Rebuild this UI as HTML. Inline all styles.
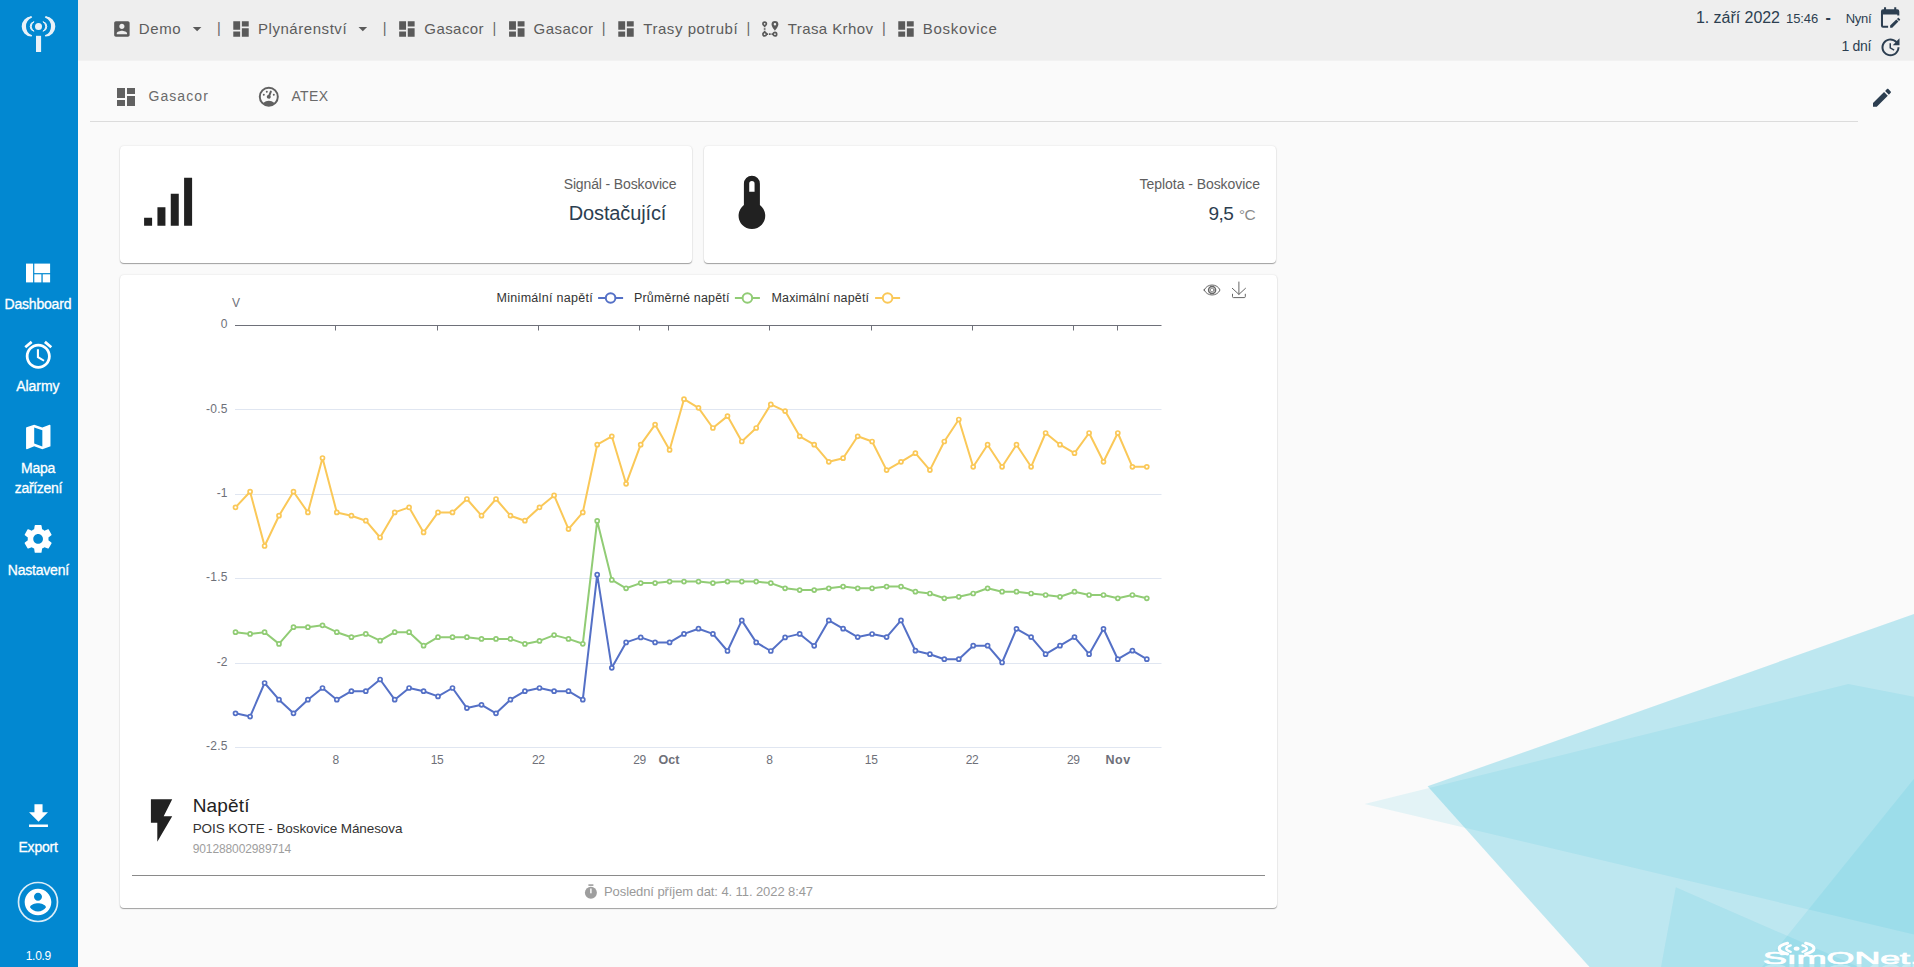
<!DOCTYPE html>
<html lang="cs">
<head>
<meta charset="utf-8">
<title>SimONet - Boskovice</title>
<style>
html,body{margin:0;padding:0}
body{width:1914px;height:967px;overflow:hidden;background:#fafafa;position:relative;font-family:"Liberation Sans",sans-serif}
.abs{position:absolute}
.t{position:absolute;white-space:pre;font-family:"Liberation Sans",sans-serif}
.t.sb{-webkit-text-stroke:.3px #fff}
.t.md{-webkit-text-stroke:.3px #666}
#side{position:absolute;left:0;top:0;width:78px;height:967px;background:#0288d1}
#top{position:absolute;left:78px;top:0;width:1836px;height:60px;background:#eeeeee;border-bottom:1px solid #f2f2f2}
#tabline{position:absolute;left:90px;top:121px;width:1768px;height:1px;background:#dcdcdc}
.card{position:absolute;background:#fff;border-radius:4px;box-shadow:0 1px 1px rgba(0,0,0,.34),0 0 2px rgba(0,0,0,.12)}
#hr{position:absolute;left:132px;top:875px;width:1133px;height:1px;background:#8a8a8a}
svg{display:block;overflow:visible}
</style>
</head>
<body>
<!-- background triangles -->
<svg class="abs" style="left:0;top:0" width="1914" height="967" viewBox="0 0 1914 967">
  <polygon points="1364.500,804 1848.300,684.100 1914,696.700 1914,934.400" fill="rgba(0,172,215,.09)"/>
  <polygon points="1427.600,786.300 1914,613.900 1914,967 1589.500,967" fill="rgba(0,172,209,.244)"/>
  <polygon points="1675.800,887.300 1858.800,967 1661,967" fill="rgba(0,172,215,.09)"/>
  <polygon points="1914,778.700 1914,967 1762,967" fill="rgba(0,172,215,.09)"/>
  <g fill="#fff">
    <text x="1763" y="963.6" font-family="Liberation Sans, sans-serif" font-size="17" textLength="157" stroke="#fff" stroke-width=".7" lengthAdjust="spacingAndGlyphs">S&#305;mONet.</text>
    <text x="1763" y="963.6" font-family="Liberation Sans, sans-serif" font-size="17" textLength="157" stroke="#fff" stroke-width=".7" lengthAdjust="spacingAndGlyphs" transform="translate(0 1928.4) scale(1 -1)" opacity=".35">S&#305;mONet.</text>
    <ellipse cx="1796.6" cy="948.6" rx="2.9" ry="2.2"/>
    <g fill="none" stroke="#fff" stroke-linecap="round"><path d="M1805.7 943.3A17.2 6.2 0 0 1 1805.7 953.9M1787.5 953.9A17.2 6.2 0 0 1 1787.5 943.3" stroke-width="3.1"/><path d="M1802.5 945.4A10.3 3.9 0 0 1 1802.5 951.8M1790.7 951.8A10.3 3.9 0 0 1 1790.7 945.4" stroke-width="2.4"/></g>
  </g>
</svg>

<div id="side"></div>
<div id="top"></div>
<div id="tabline"></div>

<div class="card" style="left:120px;top:146px;width:572px;height:117px"></div>
<div class="card" style="left:704px;top:146px;width:572px;height:117px"></div>
<div class="card" style="left:120px;top:275px;width:1157px;height:633px"></div>
<div id="hr"></div>

<!-- all icons -->
<svg class="abs" style="left:0;top:0" width="1914" height="967" viewBox="0 0 1914 967">
  <!-- sidebar logo -->
  <g fill="#e9f1f8">
    <circle cx="38.500" cy="26.400" r="3.500"/>
    <rect x="36" y="35.800" width="5.100" height="16.200"/>
    <g stroke="#e9f1f8" stroke-width="1.6" stroke-linejoin="round">
    <path d="M31.3 17A9.42 9.42 0 0 0 31.3 35.8A10.3 10.3 0 0 1 31.3 17Z"/>
    <path d="M45.7 17A9.42 9.42 0 0 1 45.7 35.8A10.3 10.3 0 0 0 45.7 17Z"/>
    <path d="M34.1 21.7A4.85 4.85 0 0 0 34.1 31.2A5.53 5.53 0 0 1 34.1 21.7Z" stroke-width="1"/>
    <path d="M42.9 21.7A4.85 4.85 0 0 1 42.9 31.2A5.53 5.53 0 0 0 42.9 21.7Z" stroke-width="1"/>
    </g>
  </g>
  <!-- sidebar icons -->
  <g fill="#fff">
    <rect x="26" y="263.600" width="7.100" height="18.800"/>
    <rect x="34.300" y="263.600" width="15.800" height="9.500"/>
    <rect x="34.300" y="274.300" width="7.100" height="8.100"/>
    <rect x="42.700" y="274.300" width="7.400" height="8.100"/>
    <path transform="translate(21.6 338.2) scale(1.39)" d="M22 5.720l-4.600-3.860-1.290 1.530 4.600 3.860L22 5.720zM7.880 3.390L6.600 1.860 2 5.710l1.290 1.530 4.590-3.850zM12.500 8H11v6l4.750 2.850.75-1.230-4-2.370V8zM12 4c-4.970 0-9 4.030-9 9s4.020 9 9 9c4.970 0 9-4.030 9-9s-4.030-9-9-9zm0 16c-3.870 0-7-3.130-7-7s3.130-7 7-7 7 3.130 7 7-3.130 7-7 7z"/>
    <path transform="translate(22 420.7) scale(1.356)" d="M20.500 3l-.16.030L15 5.100 9 3 3.360 4.900c-.21.070-.36.250-.36.480V20.500c0 .280.220.500.500.500l.16-.030L9 18.900l6 2.100 5.640-1.900c.21-.070.360-.250.360-.480V3.500c0-.280-.220-.500-.500-.500zM15 19l-6-2.110V5l6 2.110V19z"/>
    <path transform="translate(21.5 522.3) scale(1.385)" d="M19.430 12.980c.04-.32.070-.64.070-.98s-.03-.66-.07-.98l2.110-1.650c.19-.15.240-.42.120-.64l-2-3.460c-.12-.22-.39-.3-.61-.22l-2.490 1c-.52-.4-1.080-.73-1.690-.98l-.38-2.650C14.460 2.180 14.250 2 14 2h-4c-.25 0-.46.180-.49.420l-.38 2.650c-.61.250-1.170.59-1.690.98l-2.490-1c-.23-.09-.49 0-.61.220l-2 3.460c-.13.220-.07.490.12.640l2.110 1.650c-.04.320-.07.650-.07.980s.03.660.07.980l-2.110 1.650c-.19.150-.24.420-.12.640l2 3.460c.12.220.39.300.61.220l2.490-1c.52.400 1.080.73 1.690.98l.38 2.650c.03.240.24.420.49.420h4c.25 0 .46-.18.490-.42l.38-2.650c.61-.25 1.170-.59 1.690-.98l2.490 1c.23.090.49 0 .61-.22l2-3.460c.12-.22.070-.49-.12-.64l-2.110-1.650zM12 15.500c-1.930 0-3.500-1.570-3.500-3.500s1.570-3.500 3.500-3.500 3.500 1.570 3.500 3.500-1.570 3.500-3.500 3.500z"/>
    <path transform="translate(22.3 800.1) scale(1.35)" d="M19 9h-4V3H9v6H5l7 7 7-7zM5 18v2h14v-2H5z"/>
    <path transform="translate(22 886) scale(1.3333)" d="M12 2C6.480 2 2 6.480 2 12s4.480 10 10 10 10-4.480 10-10S17.520 2 12 2zm0 3c1.660 0 3 1.340 3 3s-1.340 3-3 3-3-1.340-3-3 1.340-3 3-3zm0 14.200c-2.500 0-4.710-1.280-6-3.220.030-1.990 4-3.080 6-3.080 1.990 0 5.970 1.090 6 3.080-1.290 1.940-3.500 3.220-6 3.220z"/>
  </g>
  <circle cx="38" cy="902" r="19.5" fill="none" stroke="#d9ecf8" stroke-width="1.7"/>

  <!-- topbar breadcrumb icons -->
  <g fill="#5a5a5a">
    <path transform="translate(111.600 18.700) scale(0.8583)" d="M3 5v14c0 1.100.890 2 2 2h14c1.100 0 2-.900 2-2V5c0-1.100-.900-2-2-2H5c-1.110 0-2 .900-2 2zm12 4c0 1.660-1.340 3-3 3s-3-1.340-3-3 1.340-3 3-3 3 1.340 3 3zm-9 8c0-2 4-3.100 6-3.100s6 1.100 6 3.100v1H6v-1z"/>
    <path transform="translate(186.800 18.300) scale(0.86)" d="M7 10l5 5 5-5z"/>
    <path transform="translate(352.500 18.300) scale(0.86)" d="M7 10l5 5 5-5z"/>
    <path transform="translate(230.700 18.700) scale(0.8583)" d="M3 13h8V3H3v10zm0 8h8v-6H3v6zm10 0h8V11h-8v10zm0-18v6h8V3h-8z"/>
    <path transform="translate(396.600 18.700) scale(0.8583)" d="M3 13h8V3H3v10zm0 8h8v-6H3v6zm10 0h8V11h-8v10zm0-18v6h8V3h-8z"/>
    <path transform="translate(506.500 18.700) scale(0.8583)" d="M3 13h8V3H3v10zm0 8h8v-6H3v6zm10 0h8V11h-8v10zm0-18v6h8V3h-8z"/>
    <path transform="translate(615.700 18.700) scale(0.8583)" d="M3 13h8V3H3v10zm0 8h8v-6H3v6zm10 0h8V11h-8v10zm0-18v6h8V3h-8z"/>
    <path transform="translate(895.700 18.700) scale(0.8583)" d="M3 13h8V3H3v10zm0 8h8v-6H3v6zm10 0h8V11h-8v10zm0-18v6h8V3h-8z"/>
    <path transform="translate(759.500 18.700) scale(0.8583)" d="M18,15A3,3 0 0,1 21,18A3,3 0 0,1 18,21C16.690,21 15.580,20.170 15.170,19H14V17H15.170C15.580,15.830 16.690,15 18,15M18,17A1,1 0 0,0 17,18A1,1 0 0,0 18,19A1,1 0 0,0 19,18A1,1 0 0,0 18,17M18,8A1.430,1.430 0 0,0 19.430,6.570C19.430,5.780 18.790,5.140 18,5.140C17.210,5.140 16.570,5.780 16.570,6.570A1.430,1.430 0 0,0 18,8M18,2.570A4,4 0 0,1 22,6.570C22,9.560 18,14 18,14C18,14 14,9.560 14,6.570A4,4 0 0,1 18,2.570M8.830,17H10V19H8.830C8.420,20.170 7.310,21 6,21A3,3 0 0,1 3,18C3,16.690 3.830,15.580 5,15.170V14H7V15.170C7.850,15.470 8.530,16.150 8.830,17M6,17A1,1 0 0,0 5,18A1,1 0 0,0 6,19A1,1 0 0,0 7,18A1,1 0 0,0 6,17M6,3A3,3 0 0,1 9,6C9,7.310 8.170,8.420 7,8.830V10H5V8.830C3.830,8.420 3,7.310 3,6A3,3 0 0,1 6,3M6,5A1,1 0 0,0 5,6A1,1 0 0,0 6,7A1,1 0 0,0 7,6A1,1 0 0,0 6,5M11,19V17H13V19H11M7,13H5V11H7V13Z"/>
  </g>
  <!-- tab icons -->
  <g fill="#616161">
    <path transform="translate(114 85)" d="M3 13h8V3H3v10zm0 8h8v-6H3v6zm10 0h8V11h-8v10zm0-18v6h8V3h-8z"/>
    <path transform="translate(256.800 84.700)" d="M12,2A10,10 0 0,0 2,12A10,10 0 0,0 12,22A10,10 0 0,0 22,12A10,10 0 0,0 12,2M12,4A8,8 0 0,1 20,12C20,14.400 19,16.500 17.300,18C15.900,16.700 14,16 12,16C10,16 8.200,16.700 6.700,18C5,16.500 4,14.400 4,12A8,8 0 0,1 12,4M14,5.890C13.620,5.900 13.260,6.150 13.100,6.540L11.810,9.770L11.710,10C11,10.130 10.410,10.600 10.140,11.260C9.730,12.290 10.230,13.450 11.260,13.860C12.290,14.270 13.450,13.770 13.860,12.740C14.120,12.080 14,11.320 13.570,10.760L13.670,10.500L14.960,7.290L14.970,7.260C15.170,6.750 14.920,6.170 14.410,5.960C14.280,5.910 14.150,5.890 14,5.890M10,6A1,1 0 0,0 9,7A1,1 0 0,0 10,8A1,1 0 0,0 11,7A1,1 0 0,0 10,6M7,9A1,1 0 0,0 6,10A1,1 0 0,0 7,11A1,1 0 0,0 8,10A1,1 0 0,0 7,9M17,9A1,1 0 0,0 16,10A1,1 0 0,0 17,11A1,1 0 0,0 18,10A1,1 0 0,0 17,9Z"/>
  </g>
  <!-- right icons -->
  <g fill="#2c3e50">
    <path transform="translate(1877.900 6.300) scale(1.02)" d="M19,3H18V1H16V3H8V1H6V3H5A2,2 0 0,0 3,5V19A2,2 0 0,0 5,21H10V19H5V8H19V9H21V5A2,2 0 0,0 19,3M21.700,13.350L20.700,14.350L18.650,12.350L19.650,11.350C19.850,11.140 20.190,11.130 20.420,11.350L21.700,12.630C21.890,12.830 21.890,13.150 21.700,13.350M12,18.940L18.070,12.880L20.120,14.880L14.060,21H12V18.940Z"/>
    <path transform="translate(1878.500 35.200)" d="M21,10.120H14.220L16.960,7.300C14.230,4.600 9.810,4.500 7.080,7.200C4.350,9.910 4.350,14.280 7.080,17C9.810,19.700 14.230,19.700 16.960,17C18.320,15.650 19,14.080 19,12.100H21C21,14.080 20.120,16.650 18.360,18.390C14.850,21.870 9.150,21.870 5.640,18.390C2.140,14.920 2.110,9.280 5.620,5.810C9.130,2.340 14.760,2.340 18.270,5.810L21,3V10.120M12.500,8V12.250L16,14.330L15.280,15.540L11,13V8H12.500Z"/>
    <path transform="translate(1870 85.800)" d="M20.710,7.040C21.100,6.650 21.100,6 20.710,5.630L18.370,3.290C18,2.900 17.350,2.900 16.960,3.290L15.120,5.120L18.870,8.870M3,17.250V21H6.750L17.810,9.930L14.060,6.180L3,17.250Z"/>
  </g>
  <!-- card icons -->
  <g fill="#212121">
    <path transform="translate(136.100 169.800) scale(2.6667)" d="M3,21H6V18H3M8,21H11V14H8M13,21H16V9H13M18,21H21V3H18V21Z"/>
    <path transform="translate(719.900 170.400) scale(2.6667)" d="M15 13V5A3 3 0 0 0 9 5V13A5 5 0 1 0 15 13M12 4A1 1 0 0 1 13 5V8H11V5A1 1 0 0 1 12 4Z"/>
    <path transform="translate(136 795) scale(2.13)" d="M7,2V13H10V22L17,10H13L17,2H7Z"/>
  </g>
  <!-- stopwatch -->
  <g fill="#9e9e9e">
    <circle cx="590.900" cy="892.700" r="6"/>
    <rect x="588.400" y="884.300" width="5" height="1.600"/>
    <rect x="590.200" y="888.500" width="1.400" height="4.800" fill="#fff"/>
  </g>
</svg>

<svg class="abs" style="left:0;top:0" width="1914" height="967" viewBox="0 0 1914 967"><line x1="235" x2="1161.5" y1="409.5" y2="409.5" stroke="#E0E6F1"/><line x1="235" x2="1161.5" y1="494.5" y2="494.5" stroke="#E0E6F1"/><line x1="235" x2="1161.5" y1="578.5" y2="578.5" stroke="#E0E6F1"/><line x1="235" x2="1161.5" y1="663.5" y2="663.5" stroke="#E0E6F1"/><line x1="235" x2="1161.5" y1="747.5" y2="747.5" stroke="#E0E6F1"/><line x1="235" x2="1161.500" y1="325.500" y2="325.500" stroke="#6E7079"/><line x1="335.5" x2="335.5" y1="325.5" y2="330.5" stroke="#6E7079"/><line x1="437.5" x2="437.5" y1="325.5" y2="330.5" stroke="#6E7079"/><line x1="538.5" x2="538.5" y1="325.5" y2="330.5" stroke="#6E7079"/><line x1="639.5" x2="639.5" y1="325.5" y2="330.5" stroke="#6E7079"/><line x1="668.5" x2="668.5" y1="325.5" y2="330.5" stroke="#6E7079"/><line x1="769.5" x2="769.5" y1="325.5" y2="330.5" stroke="#6E7079"/><line x1="871.5" x2="871.5" y1="325.5" y2="330.5" stroke="#6E7079"/><line x1="972.5" x2="972.5" y1="325.5" y2="330.5" stroke="#6E7079"/><line x1="1073.5" x2="1073.5" y1="325.5" y2="330.5" stroke="#6E7079"/><line x1="1117.5" x2="1117.5" y1="325.5" y2="330.5" stroke="#6E7079"/><polyline points="235.5,713.3 250.1,716.6 264.6,683.0 279.0,699.7 293.5,713.3 307.9,699.7 322.5,688.0 336.8,699.7 351.4,691.2 365.8,691.2 380.1,679.5 394.7,699.7 409.1,688.0 423.6,691.2 438.0,696.4 452.5,688.0 466.9,708.1 481.5,704.8 496.0,713.3 510.4,699.7 524.9,691.2 539.5,688.0 554.1,691.2 568.5,691.2 582.8,699.7 597.2,574.7 611.8,667.8 626.1,642.4 640.7,637.4 655.1,642.4 669.6,642.4 684.0,633.9 698.5,628.7 712.9,633.9 727.5,651.0 741.8,620.4 756.2,642.4 770.8,651.0 785.1,637.4 799.7,633.9 814.2,645.8 828.8,620.4 843.1,628.7 857.7,637.1 872.1,634.0 886.6,637.1 901.0,620.4 915.4,650.7 929.9,654.2 944.3,659.2 958.8,659.2 973.2,645.7 987.6,645.7 1002.1,662.5 1016.5,628.8 1031.1,637.1 1045.6,654.2 1060.0,645.7 1074.5,637.1 1089.1,654.2 1103.5,628.8 1117.8,659.2 1132.4,650.7 1146.8,659.2" fill="none" stroke="#5470c6" stroke-width="2" stroke-linejoin="bevel"/><g fill="#fff" stroke="#5470c6" stroke-width="1.7"><circle cx="235.5" cy="713.3" r="2"/><circle cx="250.1" cy="716.6" r="2"/><circle cx="264.6" cy="683.0" r="2"/><circle cx="279.0" cy="699.7" r="2"/><circle cx="293.5" cy="713.3" r="2"/><circle cx="307.9" cy="699.7" r="2"/><circle cx="322.5" cy="688.0" r="2"/><circle cx="336.8" cy="699.7" r="2"/><circle cx="351.4" cy="691.2" r="2"/><circle cx="365.8" cy="691.2" r="2"/><circle cx="380.1" cy="679.5" r="2"/><circle cx="394.7" cy="699.7" r="2"/><circle cx="409.1" cy="688.0" r="2"/><circle cx="423.6" cy="691.2" r="2"/><circle cx="438.0" cy="696.4" r="2"/><circle cx="452.5" cy="688.0" r="2"/><circle cx="466.9" cy="708.1" r="2"/><circle cx="481.5" cy="704.8" r="2"/><circle cx="496.0" cy="713.3" r="2"/><circle cx="510.4" cy="699.7" r="2"/><circle cx="524.9" cy="691.2" r="2"/><circle cx="539.5" cy="688.0" r="2"/><circle cx="554.1" cy="691.2" r="2"/><circle cx="568.5" cy="691.2" r="2"/><circle cx="582.8" cy="699.7" r="2"/><circle cx="597.2" cy="574.7" r="2"/><circle cx="611.8" cy="667.8" r="2"/><circle cx="626.1" cy="642.4" r="2"/><circle cx="640.7" cy="637.4" r="2"/><circle cx="655.1" cy="642.4" r="2"/><circle cx="669.6" cy="642.4" r="2"/><circle cx="684.0" cy="633.9" r="2"/><circle cx="698.5" cy="628.7" r="2"/><circle cx="712.9" cy="633.9" r="2"/><circle cx="727.5" cy="651.0" r="2"/><circle cx="741.8" cy="620.4" r="2"/><circle cx="756.2" cy="642.4" r="2"/><circle cx="770.8" cy="651.0" r="2"/><circle cx="785.1" cy="637.4" r="2"/><circle cx="799.7" cy="633.9" r="2"/><circle cx="814.2" cy="645.8" r="2"/><circle cx="828.8" cy="620.4" r="2"/><circle cx="843.1" cy="628.7" r="2"/><circle cx="857.7" cy="637.1" r="2"/><circle cx="872.1" cy="634.0" r="2"/><circle cx="886.6" cy="637.1" r="2"/><circle cx="901.0" cy="620.4" r="2"/><circle cx="915.4" cy="650.7" r="2"/><circle cx="929.9" cy="654.2" r="2"/><circle cx="944.3" cy="659.2" r="2"/><circle cx="958.8" cy="659.2" r="2"/><circle cx="973.2" cy="645.7" r="2"/><circle cx="987.6" cy="645.7" r="2"/><circle cx="1002.1" cy="662.5" r="2"/><circle cx="1016.5" cy="628.8" r="2"/><circle cx="1031.1" cy="637.1" r="2"/><circle cx="1045.6" cy="654.2" r="2"/><circle cx="1060.0" cy="645.7" r="2"/><circle cx="1074.5" cy="637.1" r="2"/><circle cx="1089.1" cy="654.2" r="2"/><circle cx="1103.5" cy="628.8" r="2"/><circle cx="1117.8" cy="659.2" r="2"/><circle cx="1132.4" cy="650.7" r="2"/><circle cx="1146.8" cy="659.2" r="2"/></g><polyline points="235.5,632.2 250.1,633.9 264.6,632.2 279.0,643.9 293.5,627.2 307.9,627.2 322.5,625.3 336.8,632.2 351.4,637.2 365.8,633.9 380.1,640.7 394.7,632.2 409.1,632.2 423.6,645.7 438.0,637.2 452.5,637.2 466.9,637.2 481.5,638.9 496.0,638.9 510.4,638.9 524.9,643.9 539.5,640.9 554.1,635.1 568.5,638.9 582.8,643.8 597.2,520.9 611.8,579.9 626.1,588.3 640.7,583.1 655.1,583.1 669.6,581.6 684.0,581.6 698.5,581.6 712.9,583.1 727.5,581.6 741.8,581.6 756.2,581.6 770.8,583.1 785.1,588.3 799.7,590.1 814.2,590.1 828.8,588.3 843.1,586.6 857.7,588.3 872.1,588.3 886.6,586.6 901.0,586.6 915.4,591.7 929.9,593.5 944.3,598.3 958.8,596.8 973.2,593.5 987.6,588.3 1002.1,591.7 1016.5,591.7 1031.1,593.5 1045.6,595.0 1060.0,596.8 1074.5,591.7 1089.1,595.0 1103.5,595.0 1117.8,598.3 1132.4,595.0 1146.8,598.3" fill="none" stroke="#91cc75" stroke-width="2" stroke-linejoin="bevel"/><g fill="#fff" stroke="#91cc75" stroke-width="1.7"><circle cx="235.5" cy="632.2" r="2"/><circle cx="250.1" cy="633.9" r="2"/><circle cx="264.6" cy="632.2" r="2"/><circle cx="279.0" cy="643.9" r="2"/><circle cx="293.5" cy="627.2" r="2"/><circle cx="307.9" cy="627.2" r="2"/><circle cx="322.5" cy="625.3" r="2"/><circle cx="336.8" cy="632.2" r="2"/><circle cx="351.4" cy="637.2" r="2"/><circle cx="365.8" cy="633.9" r="2"/><circle cx="380.1" cy="640.7" r="2"/><circle cx="394.7" cy="632.2" r="2"/><circle cx="409.1" cy="632.2" r="2"/><circle cx="423.6" cy="645.7" r="2"/><circle cx="438.0" cy="637.2" r="2"/><circle cx="452.5" cy="637.2" r="2"/><circle cx="466.9" cy="637.2" r="2"/><circle cx="481.5" cy="638.9" r="2"/><circle cx="496.0" cy="638.9" r="2"/><circle cx="510.4" cy="638.9" r="2"/><circle cx="524.9" cy="643.9" r="2"/><circle cx="539.5" cy="640.9" r="2"/><circle cx="554.1" cy="635.1" r="2"/><circle cx="568.5" cy="638.9" r="2"/><circle cx="582.8" cy="643.8" r="2"/><circle cx="597.2" cy="520.9" r="2"/><circle cx="611.8" cy="579.9" r="2"/><circle cx="626.1" cy="588.3" r="2"/><circle cx="640.7" cy="583.1" r="2"/><circle cx="655.1" cy="583.1" r="2"/><circle cx="669.6" cy="581.6" r="2"/><circle cx="684.0" cy="581.6" r="2"/><circle cx="698.5" cy="581.6" r="2"/><circle cx="712.9" cy="583.1" r="2"/><circle cx="727.5" cy="581.6" r="2"/><circle cx="741.8" cy="581.6" r="2"/><circle cx="756.2" cy="581.6" r="2"/><circle cx="770.8" cy="583.1" r="2"/><circle cx="785.1" cy="588.3" r="2"/><circle cx="799.7" cy="590.1" r="2"/><circle cx="814.2" cy="590.1" r="2"/><circle cx="828.8" cy="588.3" r="2"/><circle cx="843.1" cy="586.6" r="2"/><circle cx="857.7" cy="588.3" r="2"/><circle cx="872.1" cy="588.3" r="2"/><circle cx="886.6" cy="586.6" r="2"/><circle cx="901.0" cy="586.6" r="2"/><circle cx="915.4" cy="591.7" r="2"/><circle cx="929.9" cy="593.5" r="2"/><circle cx="944.3" cy="598.3" r="2"/><circle cx="958.8" cy="596.8" r="2"/><circle cx="973.2" cy="593.5" r="2"/><circle cx="987.6" cy="588.3" r="2"/><circle cx="1002.1" cy="591.7" r="2"/><circle cx="1016.5" cy="591.7" r="2"/><circle cx="1031.1" cy="593.5" r="2"/><circle cx="1045.6" cy="595.0" r="2"/><circle cx="1060.0" cy="596.8" r="2"/><circle cx="1074.5" cy="591.7" r="2"/><circle cx="1089.1" cy="595.0" r="2"/><circle cx="1103.5" cy="595.0" r="2"/><circle cx="1117.8" cy="598.3" r="2"/><circle cx="1132.4" cy="595.0" r="2"/><circle cx="1146.8" cy="598.3" r="2"/></g><polyline points="235.5,507.4 250.1,491.7 264.6,546.0 279.0,515.7 293.5,491.7 307.9,512.4 322.5,458.0 336.8,512.4 351.4,515.7 365.8,520.7 380.1,537.5 394.7,512.4 409.1,507.4 423.6,532.4 438.0,512.4 452.5,512.4 466.9,499.0 481.5,515.7 496.0,499.0 510.4,515.7 524.9,520.7 539.5,507.4 554.1,495.4 568.5,529.1 582.8,512.4 597.2,444.7 611.8,436.3 626.1,483.8 640.7,444.7 655.1,424.6 669.6,449.9 684.0,399.2 698.5,407.8 712.9,428.0 727.5,416.1 741.8,441.5 756.2,428.0 770.8,404.4 785.1,411.1 799.7,436.3 814.2,444.7 828.8,461.8 843.1,458.2 857.7,436.3 872.1,441.5 886.6,470.1 901.0,461.8 915.4,453.2 929.9,470.1 944.3,441.5 958.8,419.5 973.2,466.8 987.6,444.7 1002.1,466.8 1016.5,444.7 1031.1,466.8 1045.6,433.0 1060.0,444.7 1074.5,453.2 1089.1,433.0 1103.5,461.8 1117.8,433.0 1132.4,466.8 1146.8,466.8" fill="none" stroke="#fac858" stroke-width="2" stroke-linejoin="bevel"/><g fill="#fff" stroke="#fac858" stroke-width="1.7"><circle cx="235.5" cy="507.4" r="2"/><circle cx="250.1" cy="491.7" r="2"/><circle cx="264.6" cy="546.0" r="2"/><circle cx="279.0" cy="515.7" r="2"/><circle cx="293.5" cy="491.7" r="2"/><circle cx="307.9" cy="512.4" r="2"/><circle cx="322.5" cy="458.0" r="2"/><circle cx="336.8" cy="512.4" r="2"/><circle cx="351.4" cy="515.7" r="2"/><circle cx="365.8" cy="520.7" r="2"/><circle cx="380.1" cy="537.5" r="2"/><circle cx="394.7" cy="512.4" r="2"/><circle cx="409.1" cy="507.4" r="2"/><circle cx="423.6" cy="532.4" r="2"/><circle cx="438.0" cy="512.4" r="2"/><circle cx="452.5" cy="512.4" r="2"/><circle cx="466.9" cy="499.0" r="2"/><circle cx="481.5" cy="515.7" r="2"/><circle cx="496.0" cy="499.0" r="2"/><circle cx="510.4" cy="515.7" r="2"/><circle cx="524.9" cy="520.7" r="2"/><circle cx="539.5" cy="507.4" r="2"/><circle cx="554.1" cy="495.4" r="2"/><circle cx="568.5" cy="529.1" r="2"/><circle cx="582.8" cy="512.4" r="2"/><circle cx="597.2" cy="444.7" r="2"/><circle cx="611.8" cy="436.3" r="2"/><circle cx="626.1" cy="483.8" r="2"/><circle cx="640.7" cy="444.7" r="2"/><circle cx="655.1" cy="424.6" r="2"/><circle cx="669.6" cy="449.9" r="2"/><circle cx="684.0" cy="399.2" r="2"/><circle cx="698.5" cy="407.8" r="2"/><circle cx="712.9" cy="428.0" r="2"/><circle cx="727.5" cy="416.1" r="2"/><circle cx="741.8" cy="441.5" r="2"/><circle cx="756.2" cy="428.0" r="2"/><circle cx="770.8" cy="404.4" r="2"/><circle cx="785.1" cy="411.1" r="2"/><circle cx="799.7" cy="436.3" r="2"/><circle cx="814.2" cy="444.7" r="2"/><circle cx="828.8" cy="461.8" r="2"/><circle cx="843.1" cy="458.2" r="2"/><circle cx="857.7" cy="436.3" r="2"/><circle cx="872.1" cy="441.5" r="2"/><circle cx="886.6" cy="470.1" r="2"/><circle cx="901.0" cy="461.8" r="2"/><circle cx="915.4" cy="453.2" r="2"/><circle cx="929.9" cy="470.1" r="2"/><circle cx="944.3" cy="441.5" r="2"/><circle cx="958.8" cy="419.5" r="2"/><circle cx="973.2" cy="466.8" r="2"/><circle cx="987.6" cy="444.7" r="2"/><circle cx="1002.1" cy="466.8" r="2"/><circle cx="1016.5" cy="444.7" r="2"/><circle cx="1031.1" cy="466.8" r="2"/><circle cx="1045.6" cy="433.0" r="2"/><circle cx="1060.0" cy="444.7" r="2"/><circle cx="1074.5" cy="453.2" r="2"/><circle cx="1089.1" cy="433.0" r="2"/><circle cx="1103.5" cy="461.8" r="2"/><circle cx="1117.8" cy="433.0" r="2"/><circle cx="1132.4" cy="466.8" r="2"/><circle cx="1146.8" cy="466.8" r="2"/></g><line x1="598.1" x2="623.1" y1="298" y2="298" stroke="#5470c6" stroke-width="2"/><circle cx="610.6" cy="298" r="4.8" fill="#fff" stroke="#5470c6" stroke-width="2"/><line x1="734.9" x2="759.9" y1="298" y2="298" stroke="#91cc75" stroke-width="2"/><circle cx="747.4" cy="298" r="4.8" fill="#fff" stroke="#91cc75" stroke-width="2"/><line x1="875.1" x2="900.1" y1="298" y2="298" stroke="#fac858" stroke-width="2"/><circle cx="887.6" cy="298" r="4.8" fill="#fff" stroke="#fac858" stroke-width="2"/><g fill="none" stroke="#666" stroke-width="1" stroke-linecap="round" stroke-linejoin="round">
<path d="M1204.2 290C1205.5 287 1208.5 285 1212.1 285C1215.7 285 1218.7 287 1220 290C1218.7 293 1215.7 295 1212.1 295C1208.5 295 1205.500 293 1204.200 290Z"/>
<circle cx="1212.1" cy="290" r="3.5" stroke-width="1.5"/><circle cx="1212.1" cy="290" r="1.9" stroke-width=".8"/>
<path d="M1238.900 282v12.300M1232.300 288.300l6.600 6.100 6.600-6.100M1232.500 294.200v2.400q0 1 1 1h10.800q1 0 1-1v-2.400"/>
</g></svg>

<span class="t " style="left:138.80px;top:21.00px;font-size:15px;line-height:15px;color:#5c5c5c;font-weight:400;letter-spacing:0.583px;">Demo</span>
<span class="t " style="left:258.00px;top:21.00px;font-size:15px;line-height:15px;color:#5c5c5c;font-weight:400;letter-spacing:0.548px;">Plynárenství</span>
<span class="t " style="left:424.30px;top:21.00px;font-size:15px;line-height:15px;color:#5c5c5c;font-weight:400;letter-spacing:0.433px;">Gasacor</span>
<span class="t " style="left:533.50px;top:21.00px;font-size:15px;line-height:15px;color:#5c5c5c;font-weight:400;letter-spacing:0.483px;">Gasacor</span>
<span class="t " style="left:643.30px;top:21.00px;font-size:15px;line-height:15px;color:#5c5c5c;font-weight:400;letter-spacing:0.540px;">Trasy potrubí</span>
<span class="t " style="left:787.80px;top:21.00px;font-size:15px;line-height:15px;color:#5c5c5c;font-weight:400;letter-spacing:0.405px;">Trasa Krhov</span>
<span class="t " style="left:922.70px;top:21.00px;font-size:15px;line-height:15px;color:#5c5c5c;font-weight:400;letter-spacing:0.712px;">Boskovice</span>
<span class="t " style="left:217.12px;top:21.00px;font-size:14.5px;line-height:14.5px;color:#666;font-weight:400;letter-spacing:0.000px;">|</span>
<span class="t " style="left:382.81px;top:21.00px;font-size:14.5px;line-height:14.5px;color:#666;font-weight:400;letter-spacing:0.000px;">|</span>
<span class="t " style="left:492.62px;top:21.00px;font-size:14.5px;line-height:14.5px;color:#666;font-weight:400;letter-spacing:0.000px;">|</span>
<span class="t " style="left:601.82px;top:21.00px;font-size:14.5px;line-height:14.5px;color:#666;font-weight:400;letter-spacing:0.000px;">|</span>
<span class="t " style="left:746.62px;top:21.00px;font-size:14.5px;line-height:14.5px;color:#666;font-weight:400;letter-spacing:0.000px;">|</span>
<span class="t " style="left:882.01px;top:21.00px;font-size:14.5px;line-height:14.5px;color:#666;font-weight:400;letter-spacing:0.000px;">|</span>
<span class="t " style="left:1695.90px;top:10.00px;font-size:16px;line-height:16px;color:#2c3e50;font-weight:400;letter-spacing:-0.035px;">1. září 2022</span>
<span class="t " style="left:1786.00px;top:12.00px;font-size:13px;line-height:13px;color:#2c3e50;font-weight:400;letter-spacing:-0.091px;">15:46</span>
<span class="t " style="left:1825.52px;top:10.00px;font-size:16px;line-height:16px;color:#2c3e50;font-weight:700;letter-spacing:0.000px;">-</span>
<span class="t " style="left:1845.80px;top:12.00px;font-size:13px;line-height:13px;color:#2c3e50;font-weight:400;letter-spacing:-0.338px;">Nyní</span>
<span class="t " style="left:1841.40px;top:39.00px;font-size:14px;line-height:14px;color:#2c3e50;font-weight:400;letter-spacing:-0.263px;">1 dní</span>
<span class="t " style="left:148.50px;top:89.00px;font-size:14px;line-height:14px;color:#6a6a6a;font-weight:400;letter-spacing:1.063px;">Gasacor</span>
<span class="t " style="left:291.40px;top:89.00px;font-size:14px;line-height:14px;color:#6a6a6a;font-weight:400;letter-spacing:0.413px;">ATEX</span>
<span class="t sb" style="left:4.60px;top:297.00px;font-size:14px;line-height:14px;color:#ffffff;font-weight:400;letter-spacing:-0.207px;">Dashboard</span>
<span class="t sb" style="left:16.20px;top:379.00px;font-size:14px;line-height:14px;color:#ffffff;font-weight:400;letter-spacing:-0.048px;">Alarmy</span>
<span class="t sb" style="left:21.00px;top:461.00px;font-size:14px;line-height:14px;color:#ffffff;font-weight:400;letter-spacing:-0.223px;">Mapa</span>
<span class="t sb" style="left:14.70px;top:481.00px;font-size:14px;line-height:14px;color:#ffffff;font-weight:400;letter-spacing:-0.296px;">zařízení</span>
<span class="t sb" style="left:7.80px;top:563.00px;font-size:14px;line-height:14px;color:#ffffff;font-weight:400;letter-spacing:-0.209px;">Nastavení</span>
<span class="t sb" style="left:18.40px;top:840.00px;font-size:14px;line-height:14px;color:#ffffff;font-weight:400;letter-spacing:-0.172px;">Export</span>
<span class="t " style="left:25.70px;top:950.00px;font-size:12px;line-height:12px;color:#ffffff;font-weight:400;letter-spacing:-0.275px;">1.0.9</span>
<span class="t " style="left:563.70px;top:177.00px;font-size:14px;line-height:14px;color:#5e5e5e;font-weight:400;letter-spacing:-0.138px;">Signál - Boskovice</span>
<span class="t " style="left:568.80px;top:203.00px;font-size:20px;line-height:20px;color:#2c3e50;font-weight:400;letter-spacing:-0.140px;">Dostačující</span>
<span class="t " style="left:1139.60px;top:177.00px;font-size:14px;line-height:14px;color:#5e5e5e;font-weight:400;letter-spacing:-0.054px;">Teplota - Boskovice</span>
<span class="t " style="left:1208.60px;top:204.00px;font-size:19px;line-height:19px;color:#2c3e50;font-weight:400;letter-spacing:-0.655px;">9,5</span>
<span class="t " style="left:1238.90px;top:207.00px;font-size:15px;line-height:15px;color:#8a8a8a;font-weight:400;letter-spacing:0.000px;">°</span>
<span class="t " style="left:1244.52px;top:207.00px;font-size:15.5px;line-height:15.5px;color:#8a8a8a;font-weight:400;letter-spacing:0.000px;">C</span>
<span class="t " style="left:192.70px;top:796.00px;font-size:19px;line-height:19px;color:#222;font-weight:400;letter-spacing:0.169px;">Napětí</span>
<span class="t " style="left:192.70px;top:822.00px;font-size:13.5px;line-height:13.5px;color:#333;font-weight:400;letter-spacing:-0.088px;">POIS KOTE - Boskovice Mánesova</span>
<span class="t " style="left:192.70px;top:843.00px;font-size:12px;line-height:12px;color:#9e9e9e;font-weight:400;letter-spacing:-0.110px;">901288002989714</span>
<span class="t " style="left:604.00px;top:885.00px;font-size:13px;line-height:13px;color:#9a9a9a;font-weight:400;letter-spacing:-0.087px;">Poslední příjem dat: 4. 11. 2022 8:47</span>
<span class="t " style="left:231.96px;top:297.00px;font-size:12px;line-height:12px;color:#6E7079;font-weight:400;letter-spacing:0.000px;">V</span>
<span class="t " style="left:220.72px;top:318.00px;font-size:12px;line-height:12px;color:#6E7079;font-weight:400;letter-spacing:0.000px;">0</span>
<span class="t " style="left:206.10px;top:403.00px;font-size:12px;line-height:12px;color:#6E7079;font-weight:400;letter-spacing:0.200px;">-0.5</span>
<span class="t " style="left:216.70px;top:487.00px;font-size:12px;line-height:12px;color:#6E7079;font-weight:400;letter-spacing:0.020px;">-1</span>
<span class="t " style="left:206.10px;top:571.00px;font-size:12px;line-height:12px;color:#6E7079;font-weight:400;letter-spacing:0.200px;">-1.5</span>
<span class="t " style="left:216.70px;top:656.00px;font-size:12px;line-height:12px;color:#6E7079;font-weight:400;letter-spacing:0.020px;">-2</span>
<span class="t " style="left:206.10px;top:740.00px;font-size:12px;line-height:12px;color:#6E7079;font-weight:400;letter-spacing:0.200px;">-2.5</span>
<span class="t " style="left:332.47px;top:754.00px;font-size:12px;line-height:12px;color:#6E7079;font-weight:400;letter-spacing:0.000px;">8</span>
<span class="t " style="left:430.70px;top:754.00px;font-size:12px;line-height:12px;color:#6E7079;font-weight:400;letter-spacing:-0.320px;">15</span>
<span class="t " style="left:531.90px;top:754.00px;font-size:12px;line-height:12px;color:#6E7079;font-weight:400;letter-spacing:-0.320px;">22</span>
<span class="t " style="left:633.20px;top:754.00px;font-size:12px;line-height:12px;color:#6E7079;font-weight:400;letter-spacing:-0.320px;">29</span>
<span class="t " style="left:766.17px;top:754.00px;font-size:12px;line-height:12px;color:#6E7079;font-weight:400;letter-spacing:0.000px;">8</span>
<span class="t " style="left:864.80px;top:754.00px;font-size:12px;line-height:12px;color:#6E7079;font-weight:400;letter-spacing:-0.320px;">15</span>
<span class="t " style="left:965.70px;top:754.00px;font-size:12px;line-height:12px;color:#6E7079;font-weight:400;letter-spacing:-0.320px;">22</span>
<span class="t " style="left:1066.90px;top:754.00px;font-size:12px;line-height:12px;color:#6E7079;font-weight:400;letter-spacing:-0.320px;">29</span>
<span class="t " style="left:658.50px;top:754.00px;font-size:12.5px;line-height:12.5px;color:#6E7079;font-weight:700;letter-spacing:-0.006px;">Oct</span>
<span class="t " style="left:1105.40px;top:754.00px;font-size:12.5px;line-height:12.5px;color:#6E7079;font-weight:700;letter-spacing:0.587px;">Nov</span>
<span class="t " style="left:496.60px;top:292.00px;font-size:12.5px;line-height:12.5px;color:#333;font-weight:400;letter-spacing:0.287px;">Minimální napětí</span>
<span class="t " style="left:634.00px;top:292.00px;font-size:12.5px;line-height:12.5px;color:#333;font-weight:400;letter-spacing:0.162px;">Průměrné napětí</span>
<span class="t " style="left:771.50px;top:292.00px;font-size:12.5px;line-height:12.5px;color:#333;font-weight:400;letter-spacing:0.154px;">Maximální napětí</span>
</body>
</html>
